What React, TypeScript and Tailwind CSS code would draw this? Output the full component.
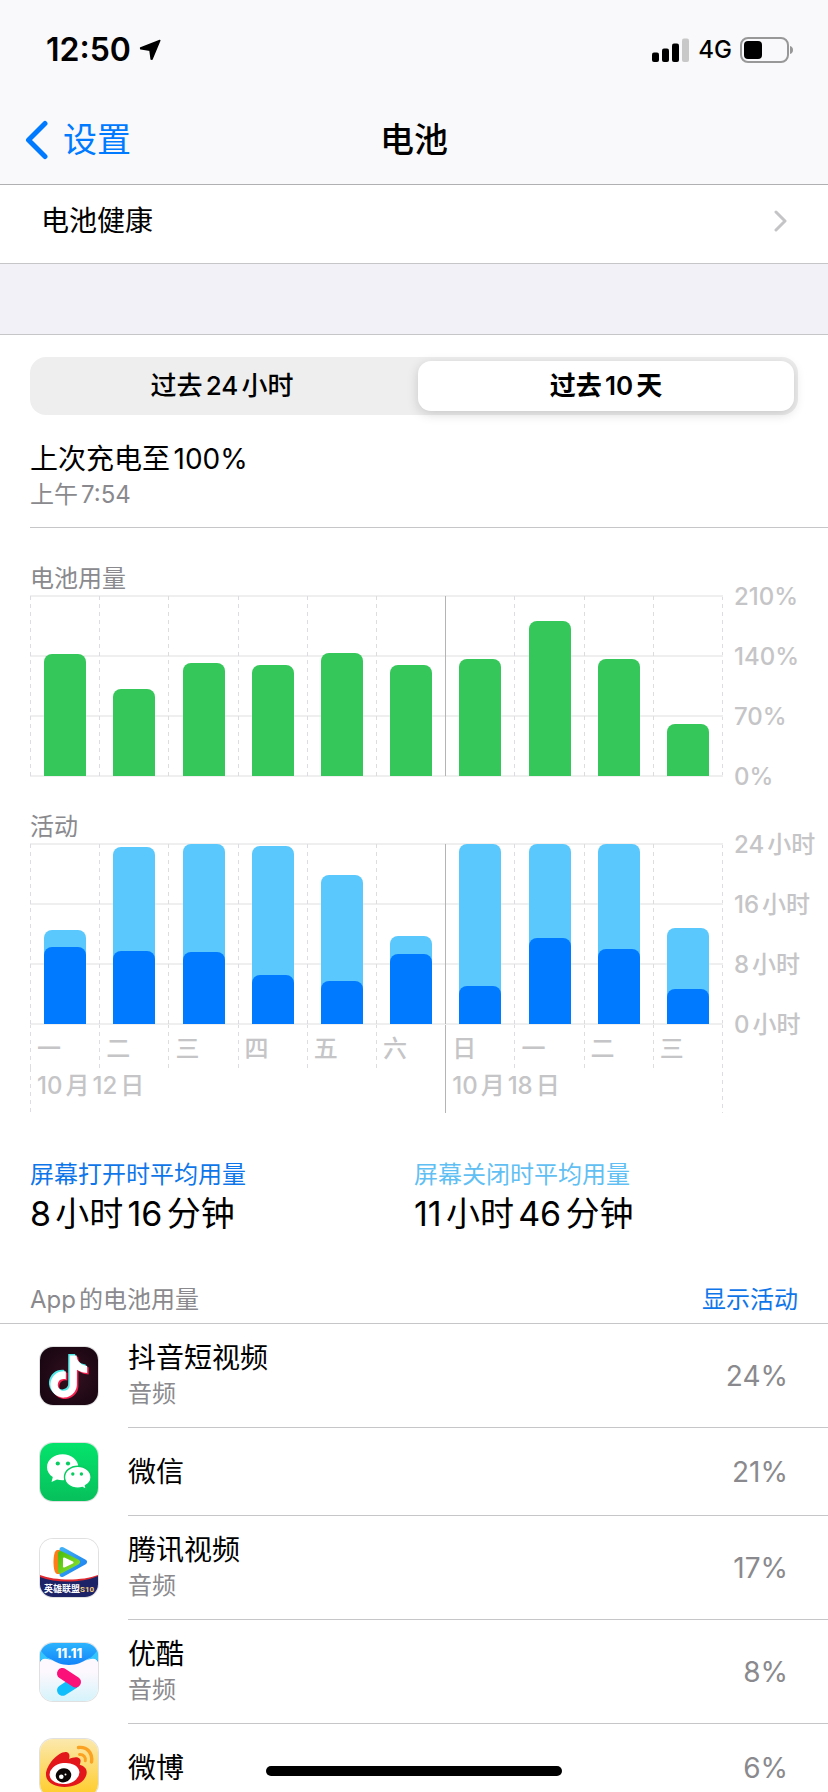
import { useState, type ReactNode } from "react";
import clsx from "clsx";

const WEEKDAYS = ["一", "二", "三", "四", "五", "六", "日", "一", "二", "三"];
const WEEK_START = 6;

const batteryUsage = [142, 101, 132, 130, 144, 129, 137, 181, 137, 61];

const activity = [
    { total: 12.5, screenOn: 10.3 },
    { total: 23.6, screenOn: 9.8 },
    { total: 24, screenOn: 9.6 },
    { total: 23.8, screenOn: 6.6 },
    { total: 19.9, screenOn: 5.8 },
    { total: 11.7, screenOn: 9.3 },
    { total: 24, screenOn: 5.1 },
    { total: 24, screenOn: 11.5 },
    { total: 24, screenOn: 10 },
    { total: 12.8, screenOn: 4.7 },
];

function DouyinIcon() {
    const note =
        "M12.525.02c1.31-.02 2.61-.01 3.91-.02.08 1.53.63 3.09 1.75 4.17 1.12 1.11 2.7 1.62 4.24 1.79v4.03c-1.44-.05-2.89-.35-4.2-.97-.57-.26-1.1-.59-1.62-.93-.01 2.92.01 5.84-.02 8.75-.08 1.4-.54 2.79-1.35 3.94-1.31 1.92-3.58 3.17-5.91 3.21-1.43.08-2.86-.31-4.08-1.03-2.02-1.19-3.44-3.37-3.65-5.71-.02-.5-.03-1-.01-1.49.18-1.9 1.12-3.72 2.58-4.96 1.66-1.44 3.98-2.13 6.15-1.72.02 1.48-.04 2.96-.04 4.44-.99-.32-2.15-.23-3.02.37-.63.41-1.11 1.04-1.36 1.75-.21.51-.15 1.07-.14 1.61.24 1.64 1.82 3.02 3.5 2.87 1.12-.01 2.19-.66 2.77-1.61.19-.33.4-.67.41-1.06.1-1.79.06-3.57.07-5.36.01-4.03-.01-8.05.02-12.07z";
    return (
        <svg viewBox="0 0 58 58" className="size-full" aria-hidden="true">
            <defs>
                <radialGradient id="douyin-bg" cx="0.55" cy="0.5" r="0.7">
                    <stop offset="0" stopColor="#34101f" />
                    <stop offset="1" stopColor="#150510" />
                </radialGradient>
            </defs>
            <rect width="58" height="58" fill="url(#douyin-bg)" />
            <g transform="translate(9.2 9.8) scale(1.76)">
                <path d={note} fill="#f5204f" />
            </g>
            <g transform="translate(6.2 7) scale(1.76)">
                <path d={note} fill="#4fe8e6" />
            </g>
            <g transform="translate(7.7 8.4) scale(1.76)">
                <path d={note} fill="#fff" />
            </g>
        </svg>
    );
}

function WechatIcon() {
    return (
        <svg viewBox="0 0 58 58" className="size-full" aria-hidden="true">
            <defs>
                <linearGradient id="wechat-bg" x1="0" y1="0" x2="0" y2="1">
                    <stop offset="0" stopColor="#05e36c" />
                    <stop offset="1" stopColor="#07c05b" />
                </linearGradient>
            </defs>
            <rect width="58" height="58" fill="url(#wechat-bg)" />
            <path d="M22.7 11.3C13.9 11.3 7 17 7 24.2c0 4 2.3 7.5 5.8 9.900l-1.3 5 5.500-2.700c1.8.5 3.7.8 5.7.8 8.6 0 15.6-5.8 15.6-13S31.3 11.3 22.7 11.3z" fill="#fff" />
            <circle cx="17.8" cy="20.5" r="2.1" fill="#07cc60" />
            <circle cx="28" cy="20.5" r="2.1" fill="#07cc60" />
            <path
                d="M37.8 23.2c-7.4 0-13.3 4.9-13.3 11s5.9 11 13.3 11c1.6 0 3.2-.2 4.6-.7l4 2.100-1-3.9c3.5-2 5.7-5 5.7-8.5 0-6.1-5.9-11-13.3-11z"
                fill="#fff"
                stroke="#07cc60"
                strokeWidth="1.4"
            />
            <circle cx="32.8" cy="31" r="1.7" fill="#07cc60" />
            <circle cx="41.4" cy="31" r="1.7" fill="#07cc60" />
        </svg>
    );
}

function TencentVideoIcon() {
    return (
        <svg viewBox="0 0 58 58" className="size-full" aria-hidden="true">
            <defs>
                <linearGradient id="tencent-blue" x1="0" y1="0" x2="1" y2="1">
                    <stop offset="0" stopColor="#3fb0f8" />
                    <stop offset="1" stopColor="#1a7fee" />
                </linearGradient>
                <linearGradient id="tencent-green" x1="0" y1="0" x2="1" y2="1">
                    <stop offset="0" stopColor="#4fc010" />
                    <stop offset="1" stopColor="#8be02c" />
                </linearGradient>
            </defs>
            <rect width="58" height="58" fill="#fff" />
            <path d="M22 10.5L44.5 23 22 35.5z" fill="url(#tencent-blue)" stroke="url(#tencent-blue)" strokeWidth="5" strokeLinejoin="round" />
            <path d="M20 11h-3c-2.300.5-3.500 5.500-3.500 12s1.200 11.500 3.500 12H20z" fill="#ff7d16" />
            <path d="M20.5 14.5L37.5 23l-17 9z" fill="url(#tencent-green)" stroke="url(#tencent-green)" strokeWidth="5" strokeLinejoin="round" />
            <path d="M24 19.500l8.500 4L24 27.500z" fill="#fff" stroke="#fff" strokeWidth="2" strokeLinejoin="round" />
            <path d="M0 36c16 6 42 6 58 0v10H0z" fill="#e0282e" />
            <path d="M0 38c16 6.5 42 6 58-1v21H0z" fill="#1c2367" />
            <text x="4" y="53" fontSize="9" fontWeight="700" fill="#fff">
                英雄联盟
            </text>
            <text x="40" y="53" fontSize="8" fontWeight="700" fontFamily="Roboto, sans-serif" fill="#f6cf7c">
                S10
            </text>
        </svg>
    );
}

function YoukuIcon() {
    return (
        <svg viewBox="0 0 58 58" className="size-full" aria-hidden="true">
            <defs>
                <linearGradient id="youku-bg" x1="0" y1="0" x2="0" y2="1">
                    <stop offset="0.5" stopColor="#fdf8fd" />
                    <stop offset="1" stopColor="#d5f3fb" />
                </linearGradient>
                <linearGradient id="youku-top" x1="0" y1="0" x2="0" y2="1">
                    <stop offset="0" stopColor="#2cb4fd" />
                    <stop offset="1" stopColor="#1383fa" />
                </linearGradient>
            </defs>
            <rect width="58" height="58" fill="url(#youku-bg)" />
            <path d="M0 0h58v19c-2-4-6-5-10-3-6 3-11 6-19 6s-13-3-19-6c-4-2-8-1-10 3z" fill="url(#youku-top)" />
            <path d="M0 6c4 7 9 10 14 12-5-2-11-4-14 0zM58 6c-4 7-9 10-14 12 5-2 11-4 14 0z" fill="#35c6fd" />
            <text x="29" y="15" textAnchor="middle" fontSize="13" fontWeight="800" fill="#fff">
                11.11
            </text>
            <path d="M22.5 47.3L34 40" stroke="#12bdfb" strokeWidth="11" strokeLinecap="round" />
            <path d="M22.5 30.5L35.5 39" stroke="#fb0f78" strokeWidth="11" strokeLinecap="round" />
        </svg>
    );
}

function WeiboIcon() {
    return (
        <svg viewBox="0 0 58 58" className="size-full" aria-hidden="true">
            <defs>
                <linearGradient id="weibo-bg" x1="0" y1="0" x2="0" y2="1">
                    <stop offset="0" stopColor="#fbe8ae" />
                    <stop offset="1" stopColor="#ffcb26" />
                </linearGradient>
            </defs>
            <rect width="58" height="58" fill="url(#weibo-bg)" />
            <path
                d="M27 13.2c2.5.8 3 3.3 2 6.8 4-1.8 9-2.8 11 0 1.2 1.8.3 4-.3 5.8 4 1.2 7.3 3.6 7 8C46.2 42 36.5 48 24.5 48 14 48 6 43 6 35.5 6 26 19 11.5 27 13.2z"
                fill="#e3161c"
            />
            <ellipse cx="24.5" cy="34.5" rx="15" ry="10.5" transform="rotate(-8 24.5 34.5)" fill="#fff" />
            <ellipse cx="23.5" cy="36.3" rx="7.8" ry="7" transform="rotate(-15 23.5 36.3)" fill="#0c0606" />
            <circle cx="21.3" cy="37.8" r="2.3" fill="#fff" />
            <circle cx="25.5" cy="35.5" r="1" fill="#fff" />
            <path d="M38.5 8.5C47 7.5 53 14 51.5 23" fill="none" stroke="#fba223" strokeWidth="3.4" strokeLinecap="round" />
            <path d="M39.5 15.5c4-.2 6.5 2.5 5.8 6.3" fill="none" stroke="#fba223" strokeWidth="3" strokeLinecap="round" />
        </svg>
    );
}

const apps = [
    { name: "抖音短视频", detail: "音频", percent: 24, icon: <DouyinIcon /> },
    { name: "微信", percent: 21, icon: <WechatIcon /> },
    { name: "腾讯视频", detail: "音频", percent: 17, icon: <TencentVideoIcon /> },
    { name: "优酷", detail: "音频", percent: 8, icon: <YoukuIcon /> },
    { name: "微博", percent: 6, icon: <WeiboIcon /> },
];

function StatusBar() {
    return (
        <div className="flex h-[100px] items-center justify-between pr-[34px] pl-[46px]">
            <div className="flex items-center gap-2">
                <span className="text-[32px] leading-10 font-semibold">12:50</span>
                <svg viewBox="0 0 22 22" className="size-[22px]" strokeWidth="1.5" stroke="black" strokeLinejoin="round" aria-hidden="true">
                    <path d="M20.8 1.5L13 20.300l-.8-.2-1.200-8.800-9.200-1.500-.2-.8z" />
                </svg>
            </div>
            <div className="flex items-center gap-2">
                <svg viewBox="0 0 38 24" className="h-6 w-[38px]" aria-label="信号">
                    <rect x="0" y="14.5" width="7" height="9.5" rx="2" />
                    <rect x="10" y="10.5" width="7" height="13.5" rx="2" />
                    <rect x="20" y="5.5" width="7" height="18.5" rx="2" />
                    <rect x="30" y="0.5" width="7" height="23.5" rx="2" fill="#c8c8c8" />
                </svg>
                <span className="text-2xl leading-8 font-medium">4G</span>
                <svg viewBox="0 0 54 26" className="h-[26px] w-[54px]" aria-label="电量">
                    <rect x="1" y="1" width="47" height="24" rx="7" fill="none" stroke="#989898" strokeWidth="2" />
                    <rect x="4" y="4" width="18" height="18" rx="4" />
                    <path d="M50 9c2 .5 3 2 3 4s-1 3.500-3 4z" fill="#989898" />
                </svg>
            </div>
        </div>
    );
}

function Divider({ solid }: { solid?: boolean }) {
    return (
        <span
            className={clsx(
                "w-px shrink-0 self-stretch",
                solid
                    ? "bg-[#b4b4b6]"
                    : "bg-[repeating-linear-gradient(to_bottom,#dddddf_0px,#dddddf_4px,transparent_4px,transparent_8px)]"
            )}
        />
    );
}

function Plot({ title, labels, bars }: { title: string; labels: string[]; bars: ReactNode[] }) {
    return (
        <section>
            <h2 className="mb-1 text-2xl leading-[26px] text-[#8a8a8e]">{title}</h2>
            <div className="flex">
                <div className="relative flex h-[180px] flex-1">
                    <div className="absolute inset-x-0 -inset-y-px flex flex-col justify-between">
                        {labels.map((label) => (
                            <span key={label} className="h-0.5 bg-[#efeff0]" />
                        ))}
                    </div>
                    {bars.map((bar, i) => (
                        <div key={i} className="relative flex flex-1">
                            <Divider solid={i === WEEK_START} />
                            <div className="flex flex-1 items-end justify-center">{bar}</div>
                        </div>
                    ))}
                    <Divider />
                </div>
                <div className="-mt-[11px] -mb-[13px] flex w-[105px] flex-col justify-between pl-[11px] text-2xl leading-6 font-medium whitespace-nowrap text-[#c5c5c7]">
                    {labels.map((label) => (
                        <span key={label}>{label}</span>
                    ))}
                </div>
            </div>
        </section>
    );
}

function Week({ days, date, solid, className }: { days: string[]; date: string; solid?: boolean; className: string }) {
    return (
        <div className={className}>
            <div className="flex h-11">
                {days.map((day, i) => (
                    <div key={i} className="flex flex-1">
                        <Divider solid={solid && i === 0} />
                        <span className="pl-1.5 leading-[50px]">{day}</span>
                    </div>
                ))}
            </div>
            <div className="flex h-[45px]">
                <Divider solid={solid} />
                <span className="pl-1.5 leading-9">{date}</span>
            </div>
        </div>
    );
}

function Average({ label, value, className }: { label: string; value: string; className: string }) {
    return (
        <div className="flex-1">
            <p className={clsx("text-2xl leading-[30px]", className)}>{label}</p>
            <p className="text-[34px] leading-[48px]">{value}</p>
        </div>
    );
}

export default function App() {
    const [range, setRange] = useState("过去10天");

    return (
        <div className="flex h-screen flex-col overflow-hidden bg-white font-['Inter','Noto_Sans_CJK_SC',sans-serif] text-black [text-autospace:normal]">
            <header className="border-b border-[#b0b0b2] bg-[#f9f9fb]">
                <StatusBar />
                <nav className="grid h-[84px] grid-cols-3 items-center px-6 pb-1">
                    <a href="#settings" className="flex items-center gap-3.5 text-[34px] leading-10 text-[#007aff]">
                        <svg viewBox="0 0 25 40" className="h-10 w-[25px]" fill="none" stroke="currentColor" strokeWidth="5" strokeLinecap="round" strokeLinejoin="round" aria-hidden="true">
                            <path d="M21 3.5L4.5 20 21 36.5" />
                        </svg>
                        设置
                    </a>
                    <h1 className="text-center text-[34px] leading-10 font-medium">电池</h1>
                </nav>
            </header>

            <main className="flex-1 overflow-y-auto [scrollbar-width:none]">
                <a href="#health" className="flex h-[79px] items-center justify-between border-b border-[#c6c6c8] pr-10 pb-1.5 pl-[41px] text-[28px]">
                    电池健康
                    <svg viewBox="0 0 16 22" className="h-[22px] w-4" fill="none" stroke="#c4c4c7" strokeWidth="3" strokeLinecap="round" strokeLinejoin="round" aria-hidden="true">
                        <path d="M4 2l9 9-9 9" />
                    </svg>
                </a>
                <div className="h-[71px] border-b border-[#c6c6c8] bg-[#f2f1f7]" />

                <div className="mx-[30px] mt-[22px] grid h-[58px] grid-cols-2 gap-2 rounded-2xl bg-[#eeeeef] p-1">
                    {["过去24小时", "过去10天"].map((option) => (
                        <button
                            key={option}
                            type="button"
                            aria-pressed={range === option}
                            onClick={() => setRange(option)}
                            className={clsx(
                                "rounded-[13px] text-[26px] leading-8",
                                range === option ? "bg-white font-semibold shadow-[0_3px_12px_rgba(0,0,0,0.16)]" : "font-medium"
                            )}
                        >
                            {option}
                        </button>
                    ))}
                </div>

                <div className="ml-[30px] border-b border-[#c6c6c8] pt-[26px] pb-3.5">
                    <p className="text-[28px] leading-9">上次充电至100%</p>
                    <p className="text-2xl leading-9 text-[#8a8a8e]">上午7:54</p>
                </div>

                <div className="flex flex-col gap-[38px] pt-[38px] pl-[30px]">
                    <Plot
                        title="电池用量"
                        labels={["210%", "140%", "70%", "0%"]}
                        bars={batteryUsage.map((value, i) => (
                            <div key={i} className="w-[42px] rounded-t-lg bg-[#35c759]" style={{ height: `${(value / 210) * 100}%` }} />
                        ))}
                    />
                    <Plot
                        title="活动"
                        labels={["24小时", "16小时", "8小时", "0小时"]}
                        bars={activity.map(({ total, screenOn }, i) => (
                            <div key={i} className="flex w-[42px] items-end rounded-t-lg bg-[#5ac8fc]" style={{ height: `${(total / 24) * 100}%` }}>
                                <div className="w-full rounded-t-lg bg-[#007aff]" style={{ height: `${(screenOn / total) * 100}%` }} />
                            </div>
                        ))}
                    />
                </div>
                <div className="mr-[105px] ml-[30px] flex text-2xl font-medium text-[#c5c5c7]">
                    <Week days={WEEKDAYS.slice(0, WEEK_START)} date="10月12日" className="flex-[6]" />
                    <Week days={WEEKDAYS.slice(WEEK_START)} date="10月18日" solid className="flex-[4]" />
                    <Divider />
                </div>

                <div className="mx-[30px] mt-[47px] flex">
                    <Average label="屏幕打开时平均用量" value="8小时16分钟" className="text-[#0f76ea]" />
                    <Average label="屏幕关闭时平均用量" value="11小时46分钟" className="text-[#62bff3]" />
                </div>

                <div className="flex justify-between border-b border-[#c6c6c8] px-[30px] pt-11 pb-[5px] text-2xl leading-9">
                    <h2 className="text-[#8a8a8e]">App的电池用量</h2>
                    <button type="button" className="text-[#0f76ea]">
                        显示活动
                    </button>
                </div>
                <ul>
                    {apps.map((app) => (
                        <li key={app.name} className="flex items-center gap-[30px] pl-10">
                            <div className="size-[58px] shrink-0 overflow-hidden rounded-[13px] shadow-[0_0_0_1px_rgba(0,0,0,0.12)]">{app.icon}</div>
                            <div className={clsx("flex flex-1 items-center justify-between border-b border-[#c6c6c8] pr-10 leading-9", app.detail ? "h-[104px]" : "h-[88px]")}>
                                <div>
                                    <p className="text-[28px] leading-9">{app.name}</p>
                                    {app.detail && <p className="text-2xl leading-9 text-[#8a8a8e]">{app.detail}</p>}
                                </div>
                                <span className="text-[28px] text-[#8a8a8e]">{app.percent}%</span>
                            </div>
                        </li>
                    ))}
                </ul>
            </main>

            <div className="fixed bottom-4 left-1/2 h-2.5 w-[296px] -translate-x-1/2 rounded-full bg-black" />
        </div>
    );
}
